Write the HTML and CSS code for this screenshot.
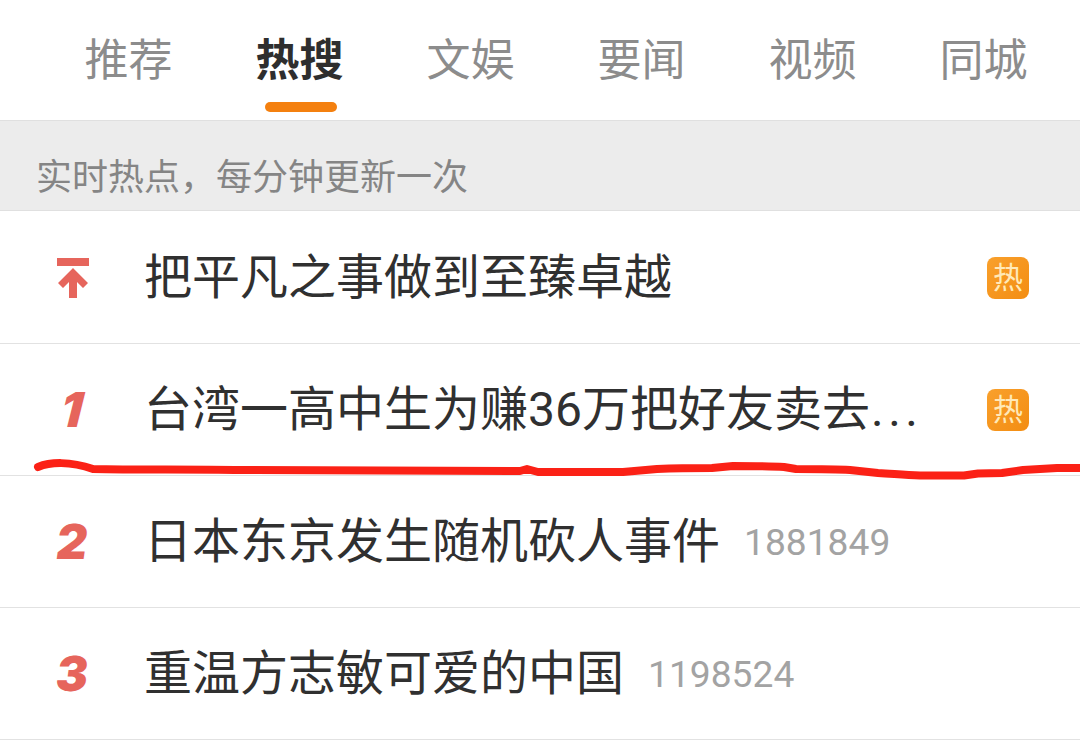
FILE: index.html
```html
<!DOCTYPE html>
<html lang="zh-CN">

<head>
    <meta charset="UTF-8">
    <title>热搜</title>
    <link rel="stylesheet" href="styles.css">
</head>

<body>
    <div class="tabs">
        <div class="tab">推荐</div>
        <div class="tab active">热搜</div>
        <div class="tab">文娱</div>
        <div class="tab">要闻</div>
        <div class="tab">视频</div>
        <div class="tab">同城</div>
    </div>
    <div class="tip">实时热点，每分钟更新一次</div>
    <div class="list">
        <div class="row">
            <div class="rank">
                <svg class="top-icon" width="32" height="40" viewBox="0 0 32 40">
                    <path d="M0 0H32V8H0Z" />
                    <path d="M16 10L31 25L26 30L20 24V40H12V24L6 30L1 25Z" />
                </svg>
            </div>
            <div class="title">把平凡之事做到至臻卓越</div>
            <div class="badge">热</div>
        </div>
        <div class="row">
            <div class="rank num first">1</div>
            <div class="title">台湾一高中生为赚36万把好友卖去<span class="dots">...</span></div>
            <div class="badge">热</div>
        </div>
        <div class="row">
            <div class="rank num">2</div>
            <div class="title">日本东京发生随机砍人事件</div>
            <div class="count">1881849</div>
        </div>
        <div class="row">
            <div class="rank num">3</div>
            <div class="title">重温方志敏可爱的中国</div>
            <div class="count">1198524</div>
        </div>
    </div>

    <!-- hand drawn red line on top of the list -->
    <svg class="scribble" width="1080" height="745" viewBox="0 0 1080 745">
        <path d="M38 467C50 462 70 461 93 469C140 470 190 469 241 470C340 471 430 471 520 471L527 469L538 472C570 472 600 472 623 472L657 469C680 468 700 468 712 468L733 466C750 466 770 466 784 467L796 469C815 469 835 469 850 470L878 473C895 474 905 475 920 475.500L964 475.500L978 473.500L1002 473L1023 470L1057 468L1082 468" />
    </svg>
</body>

</html>
```

FILE: styles.css
```css
body {
    margin: 0;
    width: 1080px;
    height: 745px;
    overflow: hidden;
    position: relative;
    background-color: #ffffff;
    font-family: Roboto, "Noto Sans CJK SC", sans-serif;
}

.tabs {
    display: grid;
    grid-template-columns: repeat(6, 171px);
    padding-left: 43px;
    height: 121px;
    box-sizing: border-box;
    border-bottom: 1px solid #e0e0e0;
}

.tab {
    position: relative;
    padding-top: 31px;
    text-align: center;
    font-size: 44px;
    line-height: 60px;
    color: #8c8c8c;
}

.tab.active {
    color: #2e2e2e;
    font-weight: 700;
}

.tab.active::after {
    content: "";
    position: absolute;
    left: 51px;
    bottom: 8px;
    width: 72px;
    height: 10px;
    border-radius: 5px;
    background-color: #f4800f;
}

.tip {
    height: 90px;
    box-sizing: border-box;
    padding: 33px 0 0 36px;
    font-size: 36px;
    line-height: 48px;
    color: #858585;
    background-color: #ececec;
    border-bottom: 1px solid #e0e0e0;
}

.list {
    padding-top: 1px;
}

.row {
    display: flex;
    align-items: center;
    height: 132px;
    box-sizing: border-box;
    border-bottom: 1px solid #e2e2e2;
}

.rank {
    display: flex;
    justify-content: center;
    width: 144px;
    padding-left: 1px;
    box-sizing: border-box;
    flex-shrink: 0;
}

.top-icon {
    fill: #e6655c;
}

.num {
    font-family: Inter, sans-serif;
    font-size: 48px;
    font-weight: 900;
    color: #e6655c;
    transform: skewX(-8deg);
}

.num.first {
    transform: skewX(-14deg);
}

.title {
    font-size: 48px;
    line-height: 64px;
    color: #303030;
}

.dots {
    padding-left: 1px;
    letter-spacing: 4.500px;
}

.count {
    margin-left: 24px;
    font-size: 37.200px;
    color: #a3a3a3;
}

.badge {
    margin-left: auto;
    margin-right: 51px;
    width: 42px;
    height: 42px;
    border-radius: 8px;
    text-align: center;
    font-size: 30px;
    line-height: 42px;
    color: #ffe9b8;
    background: linear-gradient(135deg, #f9a02c, #f38d12);
}

.scribble {
    position: absolute;
    left: 0;
    top: 0;
    fill: none;
    stroke: #fb2116;
    stroke-width: 8;
    stroke-linecap: round;
    stroke-linejoin: round;
}
```
